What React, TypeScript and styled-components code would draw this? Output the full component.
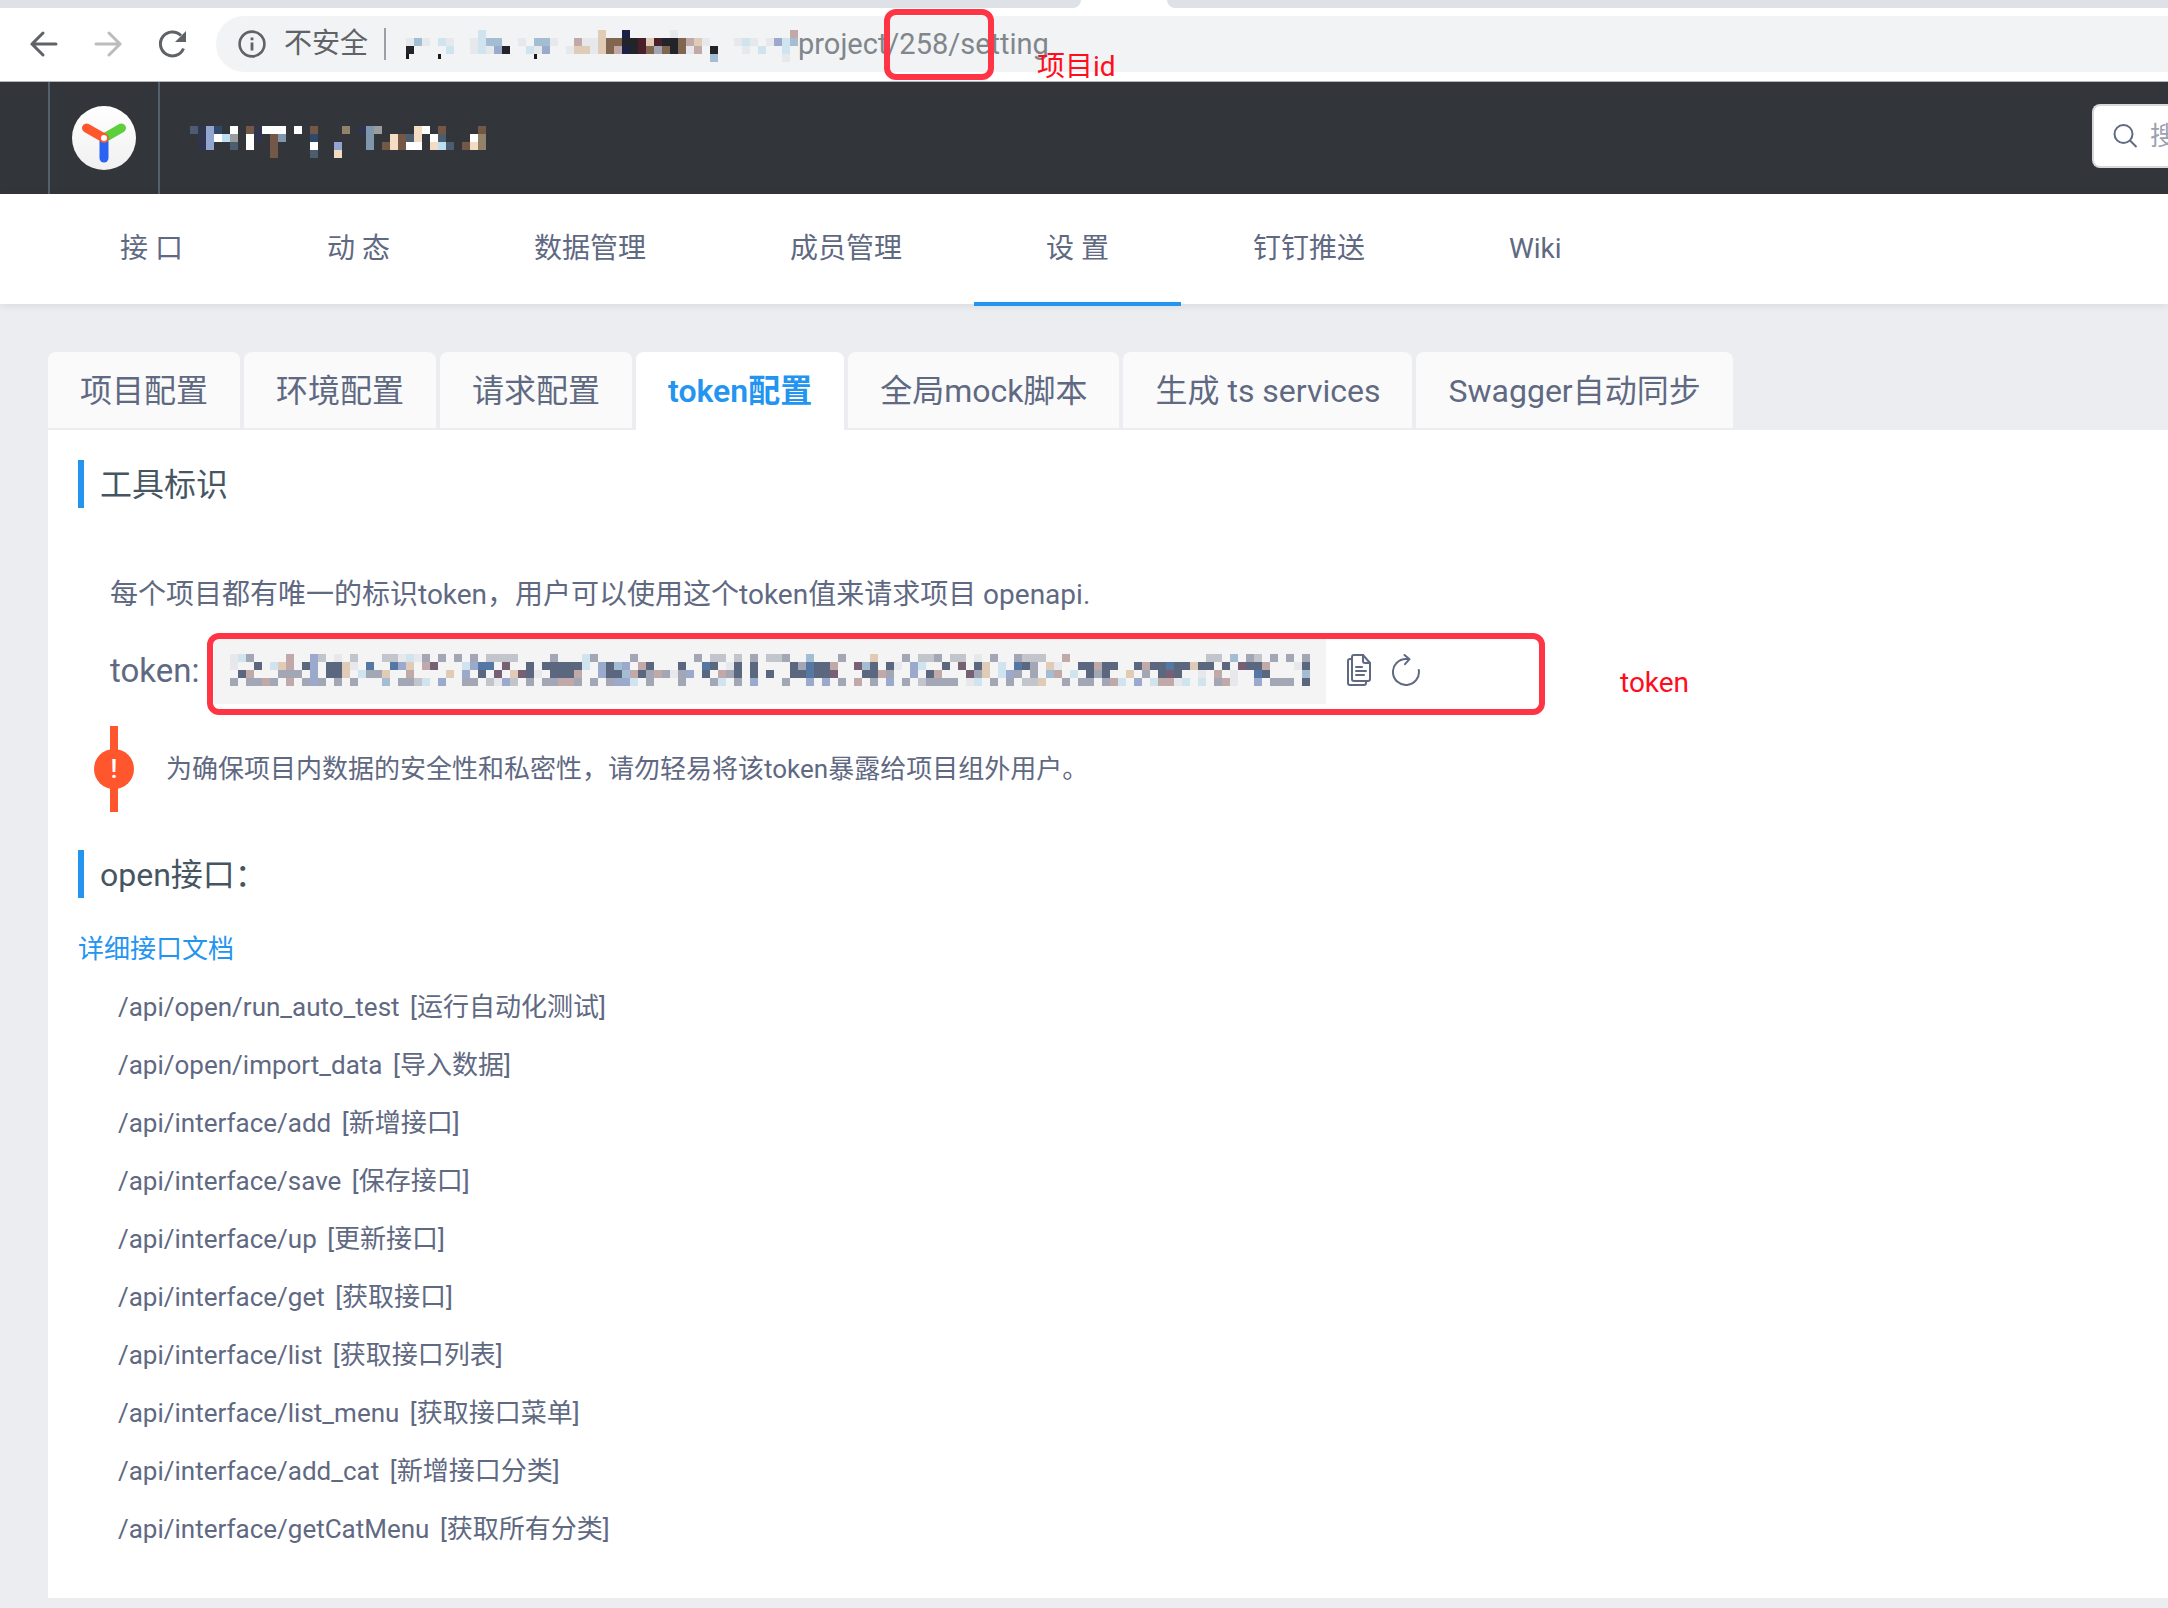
import React from 'react';
import styled, { createGlobalStyle } from 'styled-components';

const blue = '#2395f1';
const ink = '#5f6982';
const pageGrey = '#ecedf1';
const markRed = '#ff3545';

const GlobalStyle = createGlobalStyle`
  *, *::before, *::after { box-sizing: border-box; }
  body {
    margin: 0;
    background: ${pageGrey};
    color: ${ink};
    font-family: Roboto, "Noto Sans CJK SC", sans-serif;
    font-size: 28px;
    overflow-x: hidden;
  }
  h2, p, ul { margin: 0; padding: 0; font-weight: 400; }
  ul { list-style: none; }
  a { text-decoration: none; }
  button { border: 0; background: none; padding: 0; margin: 0; font: inherit; color: inherit; cursor: pointer; }
  input { border: 0; background: none; padding: 0; outline: 0; font: inherit; color: inherit; }
  svg { display: block; flex: none; }
`;

/* ---------- pixelated (redacted) text ---------- */

const CELL = 8;

const lightPalette: Record<string, string> = {
  D: '#5b667f', G: '#a3a7b5', g: '#c3c5cc', l: '#e6e8ec', b: '#9ba9cc', B: '#cfe4ef',
  u: '#5577a4', p: '#775f74', r: '#c0a9a8', o: '#e0ccb6', t: '#a3bdd2', K: '#22242a',
  N: '#1b2147', n: '#80664f', m: '#4a1f29', i: '#1a1a1a',
};

const darkPalette: Record<string, string> = {
  s: '#4b5d6e', v: '#30344c', b: '#92a5cf', N: '#30486a', w: '#ffffff', n: '#735848',
  a: '#93826a', t: '#7f96ad', G: '#9b9c9e', o: '#f3dcc2', B: '#bcdff2',
};

const urlCells = [
  '.........B..............o..N.....l..............r',
  'ltl.Bl..lBtt..l.ttl..rllonnKKmomKKnrol...lBl.lbBt',
  'K....B..lBlbK..Blb..loolonrNKmnGnKnlr.K...l.B..B.',
  'i...i...........i.....................t........l.',
];

const titleCells = [
  'svbN.w.nvwww.w.n...a.vtG....ow.n....n',
  '.vbwBG.wv.nt...N......t..onso.ws...wa',
  '.vb..s.w..n....w..b...t.nonww.oBs.noa',
  '..........n....s..o..................',
];

const tokenCells = [
  'lBG....r..bg.l.g...gglBlG.G.G.G.gggg....G...BG....G...' +
    '....G.gg.g.G.ggG..t...G...o...G.ggG.gg.l.G..Gggg..r.................gg' +
    '.t.Gg.G.G.G',
  'l..D.Bor.Db.DDol.u..ubo.rp...Bbuu.p..D.DDDDDB.bDtb.rD.' +
    '..D..uD.lD.D....DGuDDr..ptD.Dl.bB..D.p.Do.B.uDG.ol..DDrDD..DrDDuDDoDD.' +
    'D.pDDr...lD',
  '.Dr...GGG.b.DDo.BGGo..r....o.b.D.p.opDl.DDDr..bDDtrDGr' +
    'GlGb.D.rGD.D.D..DDuDDp...DDrG..b.Dr...pGo.BbG.G.tr.B.DGD..o.G.DpD..l.r' +
    '.l..uD....t',
  'G.GGrG.r.GbG.G.G...t.GGgB.b..GG.glbg.G.GGrrG.G.GbbB.G.' +
    '..G...GB.G.b...G..b.b.G.r.G.b.G.gGGGG.lB.G.G.ggo..G.GG.GrB.b.BrrlB.B.G' +
    'rl..b.GGG.D',
];

function Mosaic({ rows, palette }: { rows: string[]; palette: Record<string, string> }) {
  const cols = Math.max(...rows.map((r) => r.length));
  return (
    <svg width={cols * CELL} height={rows.length * CELL} shapeRendering="crispEdges" aria-hidden="true">
      {rows.flatMap((row, y) =>
        row.split('').map((c, x) =>
          palette[c] ? (
            <rect
              key={`${x}-${y}`}
              x={x * CELL}
              y={y * CELL}
              width={c === 'i' ? 3 : CELL}
              height={c === 'i' ? 5 : CELL}
              fill={palette[c]}
            />
          ) : null
        )
      )}
    </svg>
  );
}

/* ---------- browser chrome ---------- */

const TabStrip = styled.div`
  display: flex;
  gap: 86px;
  height: 8px;
  background: #fff;
`;

const StripPart = styled.div<{ $side: 'left' | 'right' }>`
  flex: ${(p) => (p.$side === 'left' ? '0 0 1081px' : '1')};
  background: #dee1e6;
  border-radius: ${(p) => (p.$side === 'left' ? '0 0 14px 0' : '0 0 0 14px')};
`;

const BrowserBar = styled.div`
  position: relative;
  display: flex;
  align-items: center;
  height: 74px;
  padding: 0 0 2px 28px;
  background: #fff;
  border-bottom: 1px solid #b4b6b9;
`;

const BrowserButton = styled.button<{ $dim?: boolean }>`
  display: flex;
  width: 32px;
  margin-right: 32px;
  color: ${(p) => (p.$dim ? '#babcbe' : '#5f6368')};
`;

const AddressBar = styled.div`
  flex: 1;
  display: flex;
  align-items: center;
  height: 56px;
  margin-left: -4px;
  padding-left: 20px;
  border-radius: 28px 0 0 28px;
  background: #f1f3f4;
`;

const Insecure = styled.span`
  margin-left: 16px;
  padding-right: 16px;
  line-height: 32px;
  border-right: 2px solid #9aa0a6;
  color: #5f6368;
`;

const UrlMosaic = styled.span`
  margin: 4px 0 0 20px;
`;

const UrlInput = styled.input`
  flex: 1;
  min-width: 0;
  color: #80868b;
  font-size: 29px;
`;

/* ---------- annotations drawn over the page ---------- */

const MarkBox = styled.div<{ $left: number; $top: number; $w: number; $h: number }>`
  position: absolute;
  left: ${(p) => p.$left}px;
  top: ${(p) => p.$top}px;
  width: ${(p) => p.$w}px;
  height: ${(p) => p.$h}px;
  border: 6px solid ${markRed};
  border-radius: 12px;
  pointer-events: none;
`;

const MarkText = styled.span<{ $left: number; $top: number }>`
  position: absolute;
  left: ${(p) => p.$left}px;
  top: ${(p) => p.$top}px;
  line-height: 32px;
  color: #ff0d1d;
  white-space: nowrap;
`;

/* ---------- application header ---------- */

const Header = styled.header`
  display: flex;
  align-items: center;
  height: 112px;
  padding-left: 48px;
  background: #32353a;
  overflow: hidden;
`;

const LogoLink = styled.a`
  display: flex;
  align-items: center;
  justify-content: center;
  width: 112px;
  height: 100%;
  border: solid #55606e;
  border-width: 0 2px;
`;

const HeaderTitle = styled.div`
  flex: 1;
  padding: 8px 0 0 30px;
`;

const SearchBox = styled.label`
  display: flex;
  align-items: center;
  gap: 12px;
  flex: none;
  width: 76px;
  height: 64px;
  margin-bottom: 4px;
  padding-left: 18px;
  border: 2px solid #d9d9d9;
  border-right: 0;
  border-radius: 8px 0 0 8px;
  background: #fff;
  overflow: hidden;
`;

const SearchInput = styled.input`
  flex: none;
  width: 240px;
  font-size: 26px;
  &::placeholder { color: #9ba1b0; opacity: 1; }
`;

const Nav = styled.nav`
  position: relative;
  display: flex;
  height: 110px;
  padding-left: 48px;
  background: #fff;
  box-shadow: 0 2px 8px rgba(0, 0, 0, 0.08);
`;

const NavLink = styled.a<{ $active?: boolean }>`
  height: 112px;
  padding: 0 72px;
  line-height: 110px;
  color: ${ink};
  border-bottom: 4px solid ${(p) => (p.$active ? blue : 'transparent')};
`;

/* ---------- settings page ---------- */

const Page = styled.main`
  padding: 48px 0 10px 48px;
`;

const Tabs = styled.div`
  display: flex;
  gap: 4px;
  height: 78px;
`;

const Tab = styled.button<{ $active?: boolean }>`
  height: ${(p) => (p.$active ? 78 : 76)}px;
  padding: ${(p) => (p.$active ? '0 32px' : '2px 32px 0')};
  border-radius: 8px 8px 0 0;
  background: ${(p) => (p.$active ? '#fff' : '#fafafa')};
  color: ${(p) => (p.$active ? blue : ink)};
  font-size: 32px;
  font-weight: ${(p) => (p.$active ? 600 : 400)};
  line-height: 74px;
  white-space: nowrap;
`;

const Panel = styled.section`
  padding: 30px 30px 40px;
  background: #fff;
`;

const Heading = styled.h2`
  padding: 2px 0 0 16px;
  border-left: 6px solid ${blue};
  color: #455662;
  font-size: 32px;
  line-height: 46px;
`;

const TokenBlock = styled.div`
  padding: 64px 0 0 32px;
`;

const Description = styled.p`
  line-height: 46px;
`;

const TokenRow = styled.div`
  position: relative;
  display: flex;
  align-items: center;
  height: 68px;
  margin-top: 18px;
`;

const TokenLabel = styled.span`
  flex: none;
  width: 104px;
  font-size: 33px;
`;

const TokenValue = styled.div`
  display: flex;
  align-items: center;
  height: 100%;
  padding: 0 16px;
  background: #f4f4f4;
`;

const IconButton = styled.button`
  display: flex;
  margin-left: 21px;
`;

const Notice = styled.div`
  display: flex;
  align-items: center;
  margin: 22px 0 38px 16px;
  font-size: 26px;
  line-height: 40px;
`;

const NoticeMark = styled.div`
  display: flex;
  align-items: center;
  justify-content: center;
  width: 40px;
  height: 86px;
  margin-right: 32px;
  background: linear-gradient(#ff562d, #ff562d) center / 8px 100% no-repeat;
`;

const NoticeDot = styled.span`
  width: 40px;
  height: 40px;
  border-radius: 50%;
  background: #ff562d;
  color: #fff;
  font-weight: 500;
  text-align: center;
`;

const DocLink = styled.a`
  display: block;
  margin-top: 22px;
  color: ${blue};
  font-size: 26px;
  line-height: 58px;
`;

const ApiItem = styled.li`
  padding-left: 40px;
  font-size: 26px;
  line-height: 58px;
`;

const ApiNote = styled.span`
  margin-left: 4px;
`;

/* ---------- icons ---------- */

const BackIcon = ({ flip }: { flip?: boolean }) => (
  <svg width="32" height="32" viewBox="0 0 32 32" fill="none" stroke="currentColor" strokeWidth="3" strokeLinecap="round">
    <path d={flip ? 'M4 16h24M17 5l11 11-11 11' : 'M28 16H4M15 5L4 16l11 11'} />
  </svg>
);

const ReloadIcon = () => (
  <svg width="32" height="32" viewBox="0 0 32 32" fill="none">
    <path d="M27.500 20.500A12 12 0 1 1 25 7.500" stroke="currentColor" strokeWidth="3" />
    <path d="M30 3v11H19z" fill="currentColor" />
  </svg>
);

const InfoIcon = () => (
  <svg width="32" height="32" viewBox="0 0 32 32" fill="none">
    <circle cx="16" cy="16" r="12.400" stroke="#5f6368" strokeWidth="2.600" />
    <path d="M14.600 14.500h2.800v8h-2.800zM14.600 9.500h2.800v2.800h-2.800z" fill="#5f6368" />
  </svg>
);

const Logo = () => (
  <svg width="64" height="64" viewBox="0 0 64 64" fill="none" strokeLinecap="round">
    <defs>
      <linearGradient id="disc" x1="0" y1="0" x2="0" y2="1">
        <stop offset="0" stopColor="#fff" />
        <stop offset="1" stopColor="#f0f0f0" />
      </linearGradient>
    </defs>
    <circle cx="32" cy="32" r="32" fill="url(#disc)" />
    <path d="M32 32v20" stroke="#2a62f4" strokeWidth="9" />
    <path d="M32 32l17.500-10" stroke="#5dcf3a" strokeWidth="9" />
    <path d="M32 32L14.500 22" stroke="#ff562d" strokeWidth="9" />
    <circle cx="32" cy="32" r="3.800" fill="#fff" stroke="#ff562d" strokeWidth="1.600" />
  </svg>
);

const SearchIcon = () => (
  <svg width="26" height="26" viewBox="0 0 26 26" fill="none" stroke={ink} strokeWidth="2">
    <circle cx="11.500" cy="11" r="9" />
    <path d="M18 17.500l6.500 6.500" />
  </svg>
);

const CopyIcon = () => (
  <svg width="24" height="32" viewBox="0 0 24 32" fill="none" stroke={ink} strokeWidth="2" strokeLinejoin="round" strokeLinecap="round">
    <path d="M5 5H3a2 2 0 0 0-2 2v22a2 2 0 0 0 2 2h14a2 2 0 0 0 2-2v-2" />
    <path d="M7 1h9l7 8v16a2 2 0 0 1-2 2H7a2 2 0 0 1-2-2V3a2 2 0 0 1 2-2z" />
    <path d="M16 1v6a2 2 0 0 0 2 2h5M9 13h6M9 17h10M9 21h8" />
  </svg>
);

const RefreshIcon = () => (
  <svg width="28" height="32" viewBox="0 0 28 32" fill="none" stroke={ink} strokeWidth="2" strokeLinecap="round" strokeLinejoin="round">
    <path d="M26.800 16A13 13 0 1 1 14 5h3" />
    <path d="M12.500 1l5 4.200-4.500 5" />
  </svg>
);

/* ---------- data ---------- */

const navItems = ['接 口', '动 态', '数据管理', '成员管理', '设 置', '钉钉推送', 'Wiki'];
const tabItems = ['项目配置', '环境配置', '请求配置', 'token配置', '全局mock脚本', '生成 ts services', 'Swagger自动同步'];
const apis = [
  ['/api/open/run_auto_test', '运行自动化测试'],
  ['/api/open/import_data', '导入数据'],
  ['/api/interface/add', '新增接口'],
  ['/api/interface/save', '保存接口'],
  ['/api/interface/up', '更新接口'],
  ['/api/interface/get', '获取接口'],
  ['/api/interface/list', '获取接口列表'],
  ['/api/interface/list_menu', '获取接口菜单'],
  ['/api/interface/add_cat', '新增接口分类'],
  ['/api/interface/getCatMenu', '获取所有分类'],
];

export default function App() {
  return (
    <>
      <GlobalStyle />
      <TabStrip>
        <StripPart $side="left" />
        <StripPart $side="right" />
      </TabStrip>
      <BrowserBar>
        <BrowserButton aria-label="后退"><BackIcon /></BrowserButton>
        <BrowserButton aria-label="前进" $dim><BackIcon flip /></BrowserButton>
        <BrowserButton aria-label="刷新"><ReloadIcon /></BrowserButton>
        <AddressBar>
          <InfoIcon />
          <Insecure>不安全</Insecure>
          <UrlMosaic><Mosaic rows={urlCells} palette={lightPalette} /></UrlMosaic>
          <UrlInput aria-label="地址" defaultValue="project/258/setting" />
        </AddressBar>
        <MarkBox $left={884} $top={1} $w={110} $h={71} />
        <MarkText $left={1037} $top={43}>项目id</MarkText>
      </BrowserBar>

      <Header>
        <LogoLink href="#" aria-label="YApi"><Logo /></LogoLink>
        <HeaderTitle><Mosaic rows={titleCells} palette={darkPalette} /></HeaderTitle>
        <SearchBox>
          <SearchIcon />
          <SearchInput placeholder="搜索" aria-label="搜索" />
        </SearchBox>
      </Header>

      <Nav>
        {navItems.map((n) => (
          <NavLink key={n} href="#" $active={n === '设 置'}>{n}</NavLink>
        ))}
      </Nav>

      <Page>
        <Tabs role="tablist">
          {tabItems.map((t) => (
            <Tab key={t} role="tab" aria-selected={t === 'token配置'} $active={t === 'token配置'}>{t}</Tab>
          ))}
        </Tabs>
        <Panel>
          <Heading>工具标识</Heading>
          <TokenBlock>
            <Description>每个项目都有唯一的标识token，用户可以使用这个token值来请求项目 openapi.</Description>
            <TokenRow>
              <TokenLabel>token:</TokenLabel>
              <TokenValue><Mosaic rows={tokenCells} palette={lightPalette} /></TokenValue>
              <IconButton aria-label="复制"><CopyIcon /></IconButton>
              <IconButton aria-label="重新生成"><RefreshIcon /></IconButton>
              <MarkBox $left={97} $top={-3} $w={1338} $h={82} />
              <MarkText $left={1510} $top={31}>token</MarkText>
            </TokenRow>
          </TokenBlock>
          <Notice>
            <NoticeMark><NoticeDot>!</NoticeDot></NoticeMark>
            <p>为确保项目内数据的安全性和私密性，请勿轻易将该token暴露给项目组外用户。</p>
          </Notice>
          <Heading>open接口：</Heading>
          <DocLink href="#">详细接口文档</DocLink>
          <ul>
            {apis.map(([path, note]) => (
              <ApiItem key={path}>
                {path} <ApiNote>[{note}]</ApiNote>
              </ApiItem>
            ))}
          </ul>
        </Panel>
      </Page>
    </>
  );
}
